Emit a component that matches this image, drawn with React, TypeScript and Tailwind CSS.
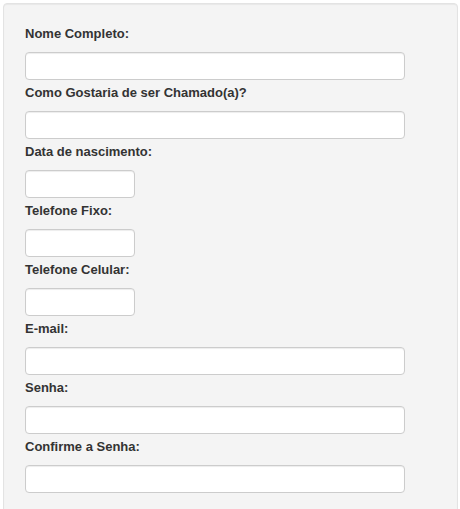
const fields: { label: string; size: "full" | "small"; type: string }[] = [
  { label: "Nome Completo:", size: "full", type: "text" },
  { label: "Como Gostaria de ser Chamado(a)?", size: "full", type: "text" },
  { label: "Data de nascimento:", size: "small", type: "text" },
  { label: "Telefone Fixo:", size: "small", type: "text" },
  { label: "Telefone Celular:", size: "small", type: "text" },
  { label: "E-mail:", size: "full", type: "email" },
  { label: "Senha:", size: "full", type: "password" },
  { label: "Confirme a Senha:", size: "full", type: "password" },
];

export default function App() {
  return (
    <div className="h-[509px] overflow-hidden bg-white pl-[3px] pt-[3px] font-['Liberation_Sans',Arial,sans-serif]">
      <form className="w-[455px] min-h-[560px] rounded-[4px] border border-[#e3e3e3] bg-[#f4f4f4] pl-[21px] pt-[21px] shadow-[inset_0_1px_1px_rgba(0,0,0,0.05)]">
        {fields.map((f) => (
          <div key={f.label} className="mb-[4px]">
            <label className="block h-[18px] text-[13px] leading-[18px] font-bold text-[#333]">
              {f.label}
            </label>
            <input
              type={f.type}
              className={
                f.size === "full"
                  ? "mt-[9px] block h-[28px] w-[380px] rounded-[4px] border border-[#cccccc] bg-white px-2 text-[13px] shadow-[inset_0_1px_1px_rgba(0,0,0,0.075)] outline-none"
                  : "mt-[9px] block h-[28px] w-[110px] rounded-[4px] border border-[#cccccc] bg-white px-2 text-[13px] shadow-[inset_0_1px_1px_rgba(0,0,0,0.075)] outline-none"
              }
            />
          </div>
        ))}
      </form>
    </div>
  );
}
